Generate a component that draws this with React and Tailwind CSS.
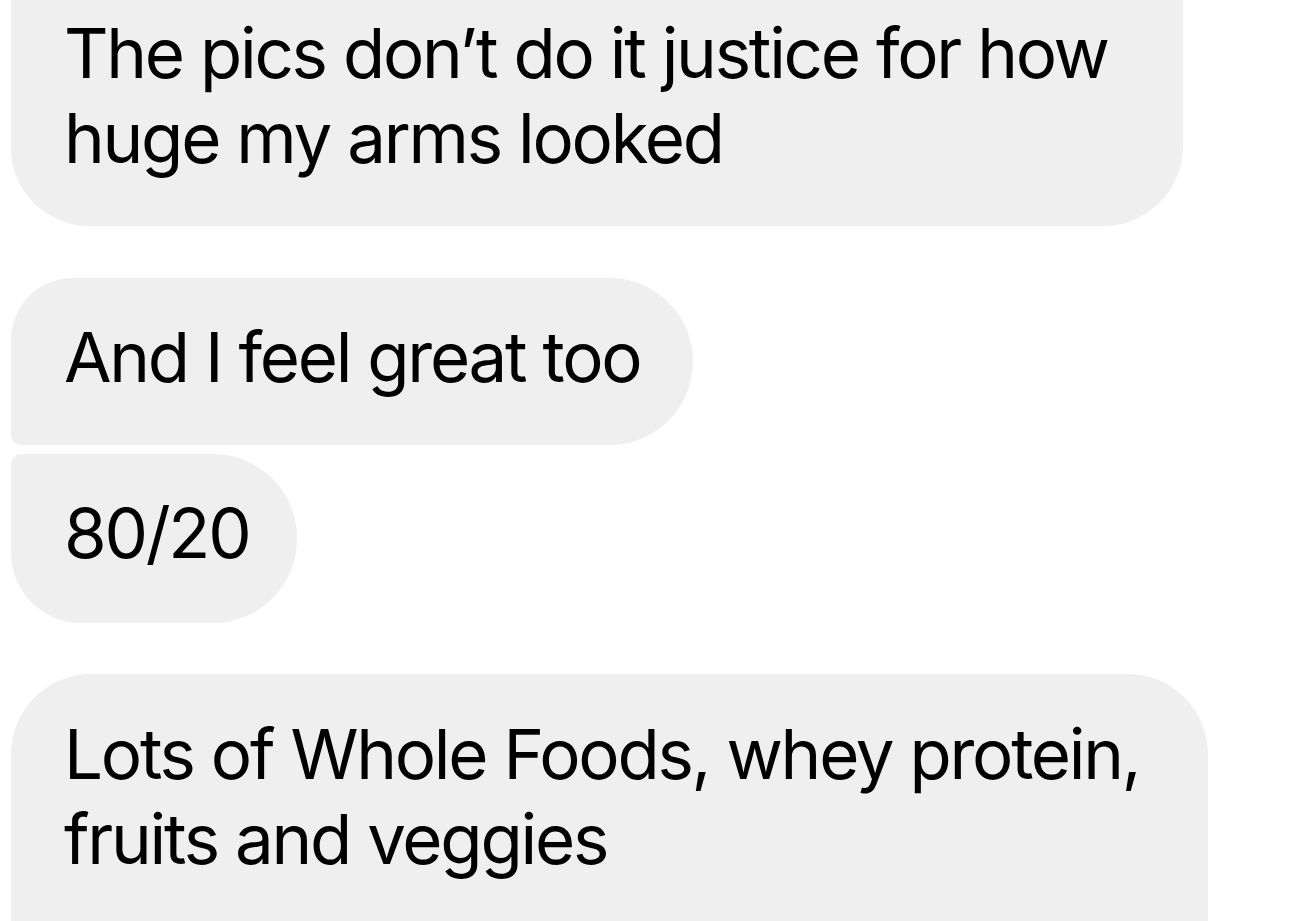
export default function App() {
  const font = { fontFamily: '"Inter", "Noto Sans", sans-serif' };
  return (
    <div className="w-[1290px] h-[921px] overflow-hidden bg-white">
      <div
        className="flex flex-col items-start pl-[11px] text-[69px] leading-[85px] text-black tracking-[-2.25px]"
        style={font}
      >
        <div className="-mt-[26px] w-[1172px] bg-[#efefef] rounded-bl-[78px] rounded-br-[80px] pl-[53px] pt-[37px] pb-[45px] whitespace-nowrap">
          The pics don’t do it justice for how
          <br />
          huge my arms looked
        </div>
        <div className="mt-[52px] w-[682px] bg-[#efefef] rounded-tl-[62px] rounded-bl-[10px] rounded-r-[84px] pl-[53px] pt-[37px] pb-[45px] whitespace-nowrap">
          And I feel great too
        </div>
        <div className="mt-[9px] w-[286px] bg-[#efefef] rounded-tl-[10px] rounded-bl-[70px] rounded-r-[84px] pl-[53px] pt-[37px] pb-[47px] whitespace-nowrap">
          80/20
        </div>
        <div className="mt-[51px] w-[1197px] bg-[#efefef] rounded-tl-[80px] rounded-tr-[80px] pl-[53px] pt-[38px] pb-[60px] whitespace-nowrap">
          Lots of Whole Foods, whey protein,
          <br />
          fruits and veggies
        </div>
      </div>
    </div>
  );
}
